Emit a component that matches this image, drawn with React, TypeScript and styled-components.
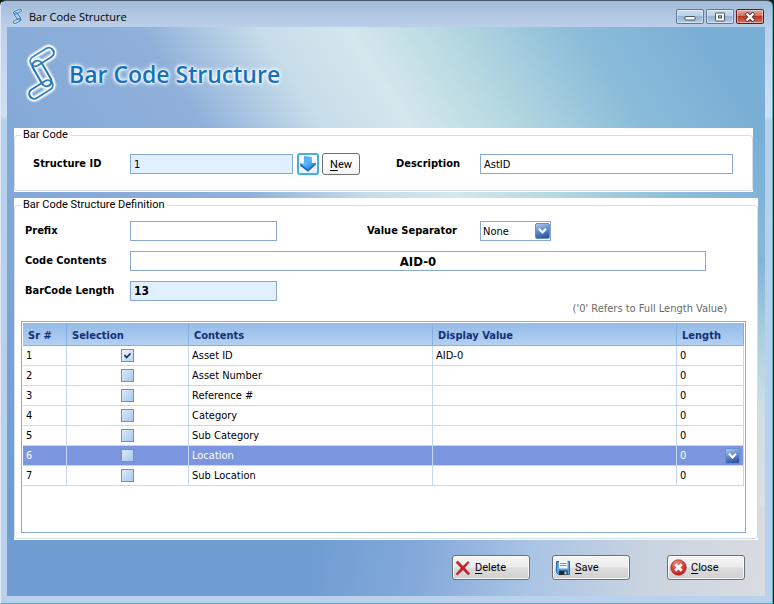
import React, { useState } from "react";
import styled, { createGlobalStyle } from "styled-components";

const Global = createGlobalStyle`
  *, *::before, *::after { box-sizing: border-box; }
  html { background: #06181c; }
  body { margin: 0; padding: 0 1px 1px 0; }
  body, button, input, select {
    font-family: "DejaVu Sans Condensed", "DejaVu Sans", sans-serif;
    font-size: 11px;
    color: #000;
  }
  u { text-underline-offset: 2px; }
`;

const Window = styled.main`
  display: flex;
  flex-direction: column;
  min-height: calc(100vh - 1px);
  padding: 0 7px 7px 6px;
  border: 1px solid #4a5a6b;
  border-left-color: #dfeaf6;
  border-right-color: #3fb6c6;
  border-bottom-color: #3fb6c6;
  border-radius: 6px 6px 0 0;
  background: linear-gradient(#a2bbd7 0, #bdd0ea 27px, #cfe0f5 115px, #b7d0ea 120px, #bad1ee 100%);
`;

const TitleBar = styled.header`
  display: flex;
  align-items: center;
  height: 26px;
  padding: 5px 1px 0 4px;
`;

const TitleText = styled.span`
  flex: 1;
  margin-left: 5px;
  font-family: "Open Sans", "Noto Sans", sans-serif;
  font-size: 11px;
  line-height: 16px;
`;

const Caption = styled.div`
  display: flex;
  gap: 2px;
`;

const CaptionButton = styled.button<{ $danger?: boolean }>`
  display: grid;
  place-items: center;
  width: 28px;
  height: 15px;
  padding: 0;
  border: 1px solid ${p => (p.$danger ? "#5a1a20" : "#5f7896")};
  border-radius: 2px;
  background: ${p => p.$danger
    ? "linear-gradient(#e3a598 0, #d06f60 48%, #b93725 50%, #d4705a 100%)"
    : "linear-gradient(#c9dcf0 0, #b8cfe8 48%, #94b2d3 50%, #b4cce6 100%)"};
  box-shadow: inset 0 0 0 1px rgba(255, 255, 255, 0.45);
`;

const Client = styled.div`
  flex: 1;
  display: flex;
  flex-direction: column;
  padding: 0 7px 16px;
  background:
    linear-gradient(57deg, #7fa6d8 0, #8fb0da 31%, #c6dce9 44%, #d3e7ec 54%, #b5d8e0 65%, #8bbcd9 79%, #7aafd5 92%) 0 0 / 100% 230px no-repeat,
    linear-gradient(97deg, #6f9dd1 40%, #85a9db 55%, #a9c4e4 69%, #c9d3e0 84%, #d9dce0 100%) 0 100% / 100% 90px no-repeat,
    linear-gradient(#7fa6d8, #6f9bd2) 0 220px / 50% 270px no-repeat,
    linear-gradient(#7aafd5 220px, #a9cfe0 310px, #cddfe4 380px, #dadfe3 480px);
`;

const Banner = styled.div`
  display: flex;
  align-items: center;
  gap: 8px;
  height: 101px;
  padding: 0 0 7px 9px;
`;

const Heading = styled.h1`
  margin: 0;
  font-family: "Open Sans", "Noto Sans", sans-serif;
  font-size: 23px;
  font-weight: 600;
  line-height: 32px;
  color: #1471bd;
  text-shadow: 0 0 2px #fff, 0 0 3px #fff, 0 0 4px #fff, 0 0 5px #fff;
`;

const Panel = styled.section<{ $inset?: boolean }>`
  margin-right: ${p => (p.$inset ? "5px" : "0")};
  margin-bottom: ${p => (p.$inset ? "6px" : "0")};
  padding-bottom: 1px;
  background: #fff;
`;

const Group = styled.fieldset`
  min-width: 0;
  margin: 0;
  padding: 0;
  border: 1px solid #d3dfe9;
  border-radius: 3px;
`;

const Legend = styled.legend`
  margin-left: 6px;
  padding: 0 2px;
  font-family: Roboto, sans-serif;
  font-size: 11px;
  line-height: 14px;
`;

const IdRow = styled.div`
  display: grid;
  grid-template-columns: 97px 163px 29px 74px 84px minmax(80px, 1fr);
  align-items: center;
  padding: 11px 19px 15px 18px;
`;

const Label = styled.label`
  font-size: 11px;
  font-weight: 700;
  line-height: 20px;
  white-space: nowrap;
`;

const Field = styled.input<{ $tint?: boolean; $strong?: boolean; $center?: boolean }>`
  width: 100%;
  min-width: 0;
  height: 20px;
  padding: 0 3px;
  border: 1px solid #86a9d2;
  border-radius: 0;
  outline: none;
  background: ${p => (p.$tint ? "#e1f0ff" : "#fff")};
  font-size: ${p => (p.$strong ? "12px" : "11px")};
  font-weight: ${p => (p.$strong ? 700 : 400)};
  text-align: ${p => (p.$center ? "center" : "left")};
`;

const IconButton = styled.button`
  display: grid;
  place-items: center;
  justify-self: center;
  width: 22px;
  height: 22px;
  padding: 0;
  border: 2px solid #46aed8;
  border-radius: 3px;
  background: linear-gradient(#fff, #e4f2fa);
`;

const NewButton = styled.button`
  width: 38px;
  height: 22px;
  padding: 0;
  border: 1px solid #707070;
  border-radius: 3px;
  background: linear-gradient(#fff, #f4f4f4);
  font-family: Roboto, sans-serif;
`;

const DefinitionGrid = styled.div`
  display: grid;
  grid-template-columns: 105px 147px 90px 113px 71px minmax(0, 1fr);
  align-items: center;
  row-gap: 10px;
  padding: 9px 51px 0 10px;
`;

const CodeField = styled(Field)`
  grid-column: 2 / -1;
  font-size: 13px;
`;

const LeftLabel = styled(Label)`
  grid-column: 1;
`;

const SeparatorLabel = styled(Label)`
  grid-column: 4;
`;

const SelectBox = styled.div`
  position: relative;
  display: flex;
`;

const Select = styled.select`
  appearance: none;
  width: 100%;
  height: 20px;
  padding: 0 18px 0 2px;
  border: 1px solid #86a9d2;
  border-radius: 0;
  background: #fff;
`;

const SelectArrow = styled.span`
  position: absolute;
  top: 2px;
  right: 1px;
  display: flex;
  pointer-events: none;
`;

const Note = styled.p`
  margin: 1px 30px 5px 0;
  line-height: 14px;
  text-align: right;
  color: #6b6b6b;
`;

const GridFrame = styled.div`
  min-height: 212px;
  margin: 0 11px 5px 6px;
  padding: 1px;
  border: 1px solid #8aa9d4;
  background: #fff;
`;

const Table = styled.table`
  width: 100%;
  table-layout: fixed;
  border-collapse: separate;
  border-spacing: 0;
`;

const Col = styled.col<{ $w?: number }>`
  width: ${p => (p.$w ? `${p.$w}px` : "auto")};
`;

const Th = styled.th`
  height: 23px;
  padding: 3px 5px 0;
  border-right: 1px solid #86aee0;
  border-bottom: 1px solid #86aee0;
  background: linear-gradient(#94bbe8, #b4d0f2);
  font-size: 11px;
  font-weight: 700;
  line-height: 16px;
  text-align: left;
  color: #10307c;
`;

const Row = styled.tr<{ $active?: boolean }>`
  background: ${p => (p.$active ? "#7b96df" : "#fff")};
  color: ${p => (p.$active ? "#fff" : "#000")};
`;

const Td = styled.td<{ $center?: boolean }>`
  height: 20px;
  padding: 0 3px;
  border-right: 1px solid #c3d9f1;
  border-bottom: 1px solid #c3d9f1;
  line-height: 14px;
  text-align: ${p => (p.$center ? "center" : "left")};
`;

const LengthCell = styled.div`
  display: flex;
  align-items: center;
  justify-content: space-between;
  height: 19px;
`;

const Check = styled.input`
  appearance: none;
  display: block;
  width: 13px;
  height: 13px;
  margin: 0 auto;
  border: 1px solid #6f91c4;
  background: linear-gradient(135deg, #dcebfc, #a9c5ee);
  &:checked {
    background:
      url("data:image/svg+xml,%3Csvg xmlns='http://www.w3.org/2000/svg' viewBox='0 0 11 11'%3E%3Cpath d='M2.5 5l2 2.5L8.5 3.5' fill='none' stroke='%23102a6a' stroke-width='1.6'/%3E%3C/svg%3E"),
      linear-gradient(135deg, #f1f7ff, #b9d1f4);
  }
`;

const Actions = styled.footer`
  display: flex;
  justify-content: flex-end;
  gap: 22px;
  margin-top: auto;
  padding: 15px 13px 0 0;
`;

const ActionButton = styled.button<{ $apart?: boolean }>`
  display: flex;
  align-items: center;
  gap: 4px;
  width: 78px;
  height: 25px;
  margin-left: ${p => (p.$apart ? "15px" : "0")};
  padding: 0 2px;
  border: 1px solid #6d7074;
  border-radius: 3px;
  background: linear-gradient(#f5f5f5 0, #ececec 48%, #dddddd 52%, #cfcfcf 100%);
  box-shadow: inset 0 0 0 1px rgba(255, 255, 255, 0.8);
  font-family: Roboto, sans-serif;
`;

const ChainLinks = () => (
  <>
    <rect x="6" y="8" width="26" height="10" rx="5" transform="rotate(-32 19 13)" />
    <rect x="5" y="40.500" width="26" height="10" rx="5" transform="rotate(-32 18 45.500)" />
    <rect x="5" y="24.500" width="28" height="10" rx="5" transform="rotate(60 19 29.500)" />
  </>
);

const ChainLogo = () => (
  <svg width="38" height="60" viewBox="0 0 38 60" fill="none" aria-hidden="true">
    <defs>
      <linearGradient id="chain" x1="0" y1="0" x2="38" y2="60" gradientUnits="userSpaceOnUse">
        <stop offset="0" stopColor="#5aa2da" />
        <stop offset=".5" stopColor="#1c6fb6" />
        <stop offset="1" stopColor="#3f92d4" />
      </linearGradient>
    </defs>
    <g stroke="#fff" strokeOpacity=".4" strokeWidth="7.500"><ChainLinks /></g>
    <g stroke="#fff" strokeWidth="5"><ChainLinks /></g>
    <g stroke="url(#chain)" strokeWidth="2"><ChainLinks /></g>
  </svg>
);

const ChainSmall = () => (
  <svg width="13" height="17" viewBox="0 0 38 60" preserveAspectRatio="none" fill="none" aria-hidden="true">
    <g stroke="#dcebfa" strokeOpacity=".7" strokeWidth="7"><ChainLinks /></g>
    <g stroke="#2f7cc2" strokeWidth="3"><ChainLinks /></g>
  </svg>
);

const ChevronBox = () => (
  <svg width="15" height="16" viewBox="0 0 15 16" aria-hidden="true">
    <defs>
      <linearGradient id="chev" x1="0" y1="0" x2=".3" y2="1">
        <stop offset="0" stopColor="#b5cdec" />
        <stop offset=".5" stopColor="#6a92d0" />
        <stop offset="1" stopColor="#3058a8" />
      </linearGradient>
    </defs>
    <rect x=".5" y=".5" width="14" height="15" rx="1.500" fill="url(#chev)" stroke="#6c8dc8" />
    <path d="M4 5.800 7.500 9.500 11 5.800" fill="none" stroke="#fff" strokeWidth="2.200" />
  </svg>
);

const DownArrow = () => (
  <svg width="18" height="18" viewBox="0 0 18 18" aria-hidden="true">
    <defs>
      <linearGradient id="down" x1="0" y1="0" x2=".8" y2="1">
        <stop offset="0" stopColor="#4ba3ee" />
        <stop offset=".5" stopColor="#5bb8fb" />
        <stop offset="1" stopColor="#2377d6" />
      </linearGradient>
    </defs>
    <path d="M5 1.500 12.500 2v6.500l4.200-.8v2L9 16.800 1.200 10.800V8.500L5 9z" fill="#1c62b8" />
    <path d="M5 1.500 12 2v6.800l4.700-1.100L9 14.800 1.200 8.500 5 9z" fill="url(#down)" />
  </svg>
);

const DeleteIcon = () => (
  <svg width="16" height="16" viewBox="0 0 16 16" aria-hidden="true">
    <path d="M1 2.500 2.800 1 8 6.300 13 1.500l1.200.8L9.600 8l5.200 5.500-1.600 1.500L8 9.800 2.500 15 1 14l5.200-6z" fill="#c8202c" stroke="#9c1820" strokeWidth=".5" />
  </svg>
);

const SaveIcon = () => (
  <svg width="16" height="16" viewBox="0 0 16 16" aria-hidden="true">
    <path d="M1.500 1.500h13v13h-11l-2-2z" fill="#55a3e2" stroke="#2a6cab" />
    <path d="M4 1h8.500v7.500H4z" fill="#f7fafd" />
    <path d="M5 3.500h6.500M5 5.500h6.500" stroke="#7c8fa0" />
    <path d="M4 10.500h8.500V15H4z" fill="#1e2b38" />
    <path d="M9.500 11.500h2v3h-2z" fill="#b9c9d8" />
  </svg>
);

const CloseIcon = () => (
  <svg width="17" height="17" viewBox="0 0 17 17" aria-hidden="true">
    <defs>
      <radialGradient id="red" cx=".4" cy=".25" r=".8">
        <stop offset="0" stopColor="#f08a78" />
        <stop offset=".6" stopColor="#d23c30" />
        <stop offset="1" stopColor="#a81d1a" />
      </radialGradient>
    </defs>
    <circle cx="8.500" cy="8.500" r="7.800" fill="url(#red)" stroke="#a02a22" strokeWidth=".6" />
    <path d="M5.200 5.200l6.600 6.600M11.800 5.200l-6.600 6.600" stroke="#fff" strokeWidth="2.800" />
  </svg>
);

const MinimizeIcon = () => (
  <svg width="12" height="9" viewBox="0 0 12 9" aria-hidden="true">
    <rect x="1" y="4.500" width="10" height="3.500" rx=".5" fill="#fff" stroke="#4a5564" />
  </svg>
);

const MaximizeIcon = () => (
  <svg width="12" height="10" viewBox="0 0 12 10" aria-hidden="true">
    <rect x="1.500" y="1" width="9" height="8" rx=".5" fill="#fff" stroke="#4a5564" />
    <rect x="4.500" y="3.800" width="3" height="2.200" fill="#b9cde4" stroke="#4a5564" />
  </svg>
);

const CrossIcon = () => (
  <svg width="12" height="10" viewBox="0 0 12 10" aria-hidden="true">
    <path d="M2 1l8 8M10 1l-8 8" stroke="#5b3438" strokeWidth="4.200" />
    <path d="M2.500 1.500l7 7M9.500 1.500l-7 7" stroke="#fff" strokeWidth="2.400" />
  </svg>
);

const contents = [
  { name: "Asset ID", display: "AID-0" },
  { name: "Asset Number", display: "" },
  { name: "Reference #", display: "" },
  { name: "Category", display: "" },
  { name: "Sub Category", display: "" },
  { name: "Location", display: "" },
  { name: "Sub Location", display: "" },
];

export default function App() {
  const [active, setActive] = useState(5);
  return (
    <>
      <Global />
      <Window>
        <TitleBar>
          <ChainSmall />
          <TitleText>Bar Code Structure</TitleText>
          <Caption>
            <CaptionButton aria-label="Minimize"><MinimizeIcon /></CaptionButton>
            <CaptionButton aria-label="Maximize"><MaximizeIcon /></CaptionButton>
            <CaptionButton $danger aria-label="Close window"><CrossIcon /></CaptionButton>
          </Caption>
        </TitleBar>
        <Client>
          <Banner>
            <ChainLogo />
            <Heading>Bar Code Structure</Heading>
          </Banner>

          <Panel $inset>
            <Group>
              <Legend>Bar Code</Legend>
              <IdRow>
                <Label htmlFor="sid">Structure ID</Label>
                <Field id="sid" $tint defaultValue="1" />
                <IconButton aria-label="Pick structure"><DownArrow /></IconButton>
                <NewButton><u>N</u>ew</NewButton>
                <Label htmlFor="desc">Description</Label>
                <Field id="desc" defaultValue="AstID" />
              </IdRow>
            </Group>
          </Panel>

          <Panel>
            <Group>
              <Legend>Bar Code Structure Definition</Legend>
              <DefinitionGrid>
                <Label htmlFor="prefix">Prefix</Label>
                <Field id="prefix" />
                <SeparatorLabel htmlFor="sep">Value Separator</SeparatorLabel>
                <SelectBox>
                  <Select id="sep" defaultValue="None"><option>None</option></Select>
                  <SelectArrow><ChevronBox /></SelectArrow>
                </SelectBox>
                <LeftLabel htmlFor="code">Code Contents</LeftLabel>
                <CodeField id="code" $strong $center defaultValue="AID-0" />
                <LeftLabel htmlFor="len">BarCode Length</LeftLabel>
                <Field id="len" $tint $strong defaultValue="13" />
              </DefinitionGrid>
              <Note>('0' Refers to Full Length Value)</Note>
              <GridFrame>
                <Table>
                  <colgroup>
                    <Col $w={44} /><Col $w={122} /><Col /><Col /><Col $w={67} />
                  </colgroup>
                  <thead>
                    <tr>
                      <Th>Sr #</Th><Th>Selection</Th><Th>Contents</Th><Th>Display Value</Th><Th>Length</Th>
                    </tr>
                  </thead>
                  <tbody>
                    {contents.map((c, i) => (
                      <Row key={c.name} $active={i === active} onClick={() => setActive(i)}>
                        <Td>{i + 1}</Td>
                        <Td $center><Check type="checkbox" aria-label={c.name} defaultChecked={i === 0} /></Td>
                        <Td>{c.name}</Td>
                        <Td>{c.display}</Td>
                        <Td><LengthCell>0{i === active && <ChevronBox />}</LengthCell></Td>
                      </Row>
                    ))}
                  </tbody>
                </Table>
              </GridFrame>
            </Group>
          </Panel>

          <Actions>
            <ActionButton><DeleteIcon /><span><u>D</u>elete</span></ActionButton>
            <ActionButton><SaveIcon /><span><u>S</u>ave</span></ActionButton>
            <ActionButton $apart><CloseIcon /><span><u>C</u>lose</span></ActionButton>
          </Actions>
        </Client>
      </Window>
    </>
  );
}
